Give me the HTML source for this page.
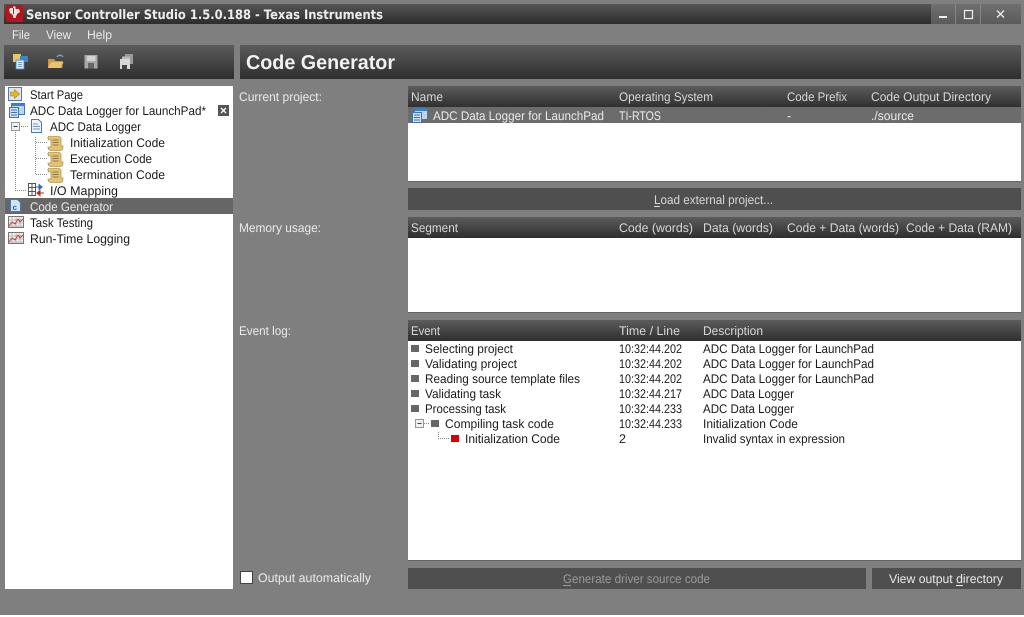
<!DOCTYPE html>
<html><head><meta charset="utf-8"><style>
html,body{margin:0;padding:0;background:#fff;width:1024px;height:617px;overflow:hidden}
svg{display:block}
text{font-family:"Liberation Sans",sans-serif;font-size:12.5px;fill:#1a1a1a;text-rendering:geometricPrecision}
.w{fill:#eaeaea}
.h{fill:#d8d8d8}
</style></head><body>
<svg width="1024" height="617" viewBox="0 0 1024 617" xmlns="http://www.w3.org/2000/svg">
<defs>
<linearGradient id="g" x1="0" y1="0" x2="0" y2="1"><stop offset="0" stop-color="#5c5c5c"/><stop offset="1" stop-color="#2e2e2e"/></linearGradient>
<linearGradient id="t" x1="0" y1="0" x2="0" y2="1"><stop offset="0" stop-color="#555"/><stop offset="1" stop-color="#2c2c2c"/></linearGradient>
<linearGradient id="wb" x1="0" y1="0" x2="0" y2="1"><stop offset="0" stop-color="#707070"/><stop offset="1" stop-color="#5a5a5a"/></linearGradient>
<g id="scroll"><path d="M1.500 1.500h10c2 0 2.500 1.500 2.500 3V11h2v1c0 2-1 3.500-3 3.500H4c-2 0-3-1.500-3-3.500h3V5H2.500C1 5 .5 2.500 1.500 1.500z" fill="#e3c279" stroke="#b8974c" stroke-width=".8"/><path d="M5.500 5h6M5.500 7.500h6M5.500 10h6" stroke="#94753a" stroke-width=".9"/></g>
<g id="chart"><rect x=".5" y="1.500" width="15" height="11" fill="#f3eeee" stroke="#777"/><path d="M1 5h14M1 8h14M1 11h14M4 2v10M8 2v10M12 2v10" stroke="#aaa" stroke-width=".7"/><path d="M1 11l3-4 3 2 3-5 2 3 3-3" fill="none" stroke="#c03a3a"/></g>
<g id="proj"><rect x="3.500" y=".5" width="13" height="11" fill="#bcd6f0" stroke="#3f74b0"/><rect x="3.500" y=".5" width="13" height="2.500" fill="#3f7fc4"/><rect x="1.500" y="4.500" width="9" height="10" fill="#cfe1f4" stroke="#3f74b0"/><path d="M3 7h6M3 9.500h6M3 12h6" stroke="#3f74b0"/></g>
</defs>

<rect width="1024" height="615" fill="#7f7f7f"/>

<!-- title bar -->
<rect x="4" y="4" width="927" height="20" fill="url(#t)"/>
<rect x="931" y="4" width="90" height="20" fill="url(#wb)"/>
<path d="M955.500 4v20M980.500 4v20" stroke="#858585"/>
<rect x="6" y="5" width="17" height="17" fill="#b3161c"/>
<path d="M10 8h3v-1.500h2.500v2.500h3.500l1 3-3 2-1.500 4h-2l-1-3.500-2.500-1.500-1-3z" fill="#f4e4e4"/>
<path d="M13.500 8v6" stroke="#b3161c"/>
<text x="26" y="19" textLength="357" lengthAdjust="spacingAndGlyphs" style="font-family:'DejaVu Sans',sans-serif;font-weight:bold;font-size:13px;fill:#eee">Sensor Controller Studio 1.5.0.188 - Texas Instruments</text>
<rect x="939" y="16" width="8" height="2" fill="#eee"/>
<rect x="964.500" y="10.500" width="8" height="8" fill="none" stroke="#eee" stroke-width="1.200"/>
<path d="M997 10.500l7 7M1004 10.500l-7 7" stroke="#eee" stroke-width="1.300"/>

<!-- menu -->
<text class="w" x="12" y="39" textLength="18" lengthAdjust="spacingAndGlyphs">File</text>
<text class="w" x="46" y="39" textLength="25" lengthAdjust="spacingAndGlyphs">View</text>
<text class="w" x="87" y="39" textLength="25" lengthAdjust="spacingAndGlyphs">Help</text>

<!-- toolbar -->
<rect x="4" y="45" width="230" height="34" fill="url(#g)"/>
<rect x="13" y="54" width="8" height="8" fill="#e8c860"/>
<rect x="20" y="56" width="8" height="6" fill="#3d87c9"/>
<rect x="16" y="60" width="8" height="9" fill="#dbe9f7" stroke="#4a86c0" stroke-width=".8"/>
<path d="M18 62.500h4M18 64.500h4M18 66.500h4" stroke="#4a86c0" stroke-width=".7"/>
<path d="M48 59h6l1.500 2h7v7h-14.500z" fill="#c99a45"/>
<path d="M48 68l3-6h12.500l-3 6z" fill="#eec26b"/>
<path d="M57 57c2-2.500 4-2.500 6 0" fill="none" stroke="#7aa7d0" stroke-width="1.300"/>
<path d="M84.500 55h13v13.500h-13z" fill="#a9a9a9"/>
<rect x="87" y="56" width="8.500" height="5" fill="#d4d4d4"/>
<rect x="88" y="63" width="6" height="5.500" fill="#666"/>
<rect x="125" y="54" width="8" height="10" fill="#999"/>
<rect x="122" y="56.500" width="8" height="10" fill="#bbb"/>
<rect x="120" y="59" width="10" height="10" fill="#d8d8d8"/>
<rect x="122" y="65" width="5" height="4" fill="#444"/>

<!-- code generator header -->
<rect x="240" y="45" width="781" height="34" fill="url(#g)"/>
<text x="246" y="69" textLength="149" lengthAdjust="spacingAndGlyphs" style="font-size:20px;font-weight:bold;fill:#f2f2f2">Code Generator</text>

<!-- tree panel -->
<rect x="5" y="86" width="228" height="503" fill="#fff"/>
<rect x="5" y="198" width="228" height="16" fill="#666"/>
<rect x="8.500" y="87.500" width="13" height="13" fill="#dbe6f5" stroke="#5377ad"/>
<path d="M10.500 92h4v-2.500l5 4.500-5 4.500v-2.500h-4z" fill="#e6b820" stroke="#a07f10" stroke-width=".6"/>
<use href="#proj" x="8" y="103"/>
<text x="30" y="99" textLength="53" lengthAdjust="spacingAndGlyphs">Start Page</text>
<text x="30" y="115" textLength="176" lengthAdjust="spacingAndGlyphs">ADC Data Logger for LaunchPad*</text>
<rect x="218" y="105" width="11" height="11" fill="#555"/>
<path d="M221 108l5 5M226 108l-5 5" stroke="#fff" stroke-width="1.300"/>
<path d="M15.500 132v58.500H27M35.500 137v37M36 142.500H47M36 158.500H47M36 174.500H47M21 126.500h8" stroke="#888" stroke-dasharray="1 1" fill="none"/>
<rect x="11.500" y="122.500" width="8" height="8" fill="#f0f0f0" stroke="#8a9aaa"/>
<path d="M13.500 126.500h4" stroke="#444"/>
<path d="M31.500 119.500h7l3 3v10h-10z" fill="#eef4fb" stroke="#4a78ad"/>
<path d="M33 124h5M33 126.500h7M33 129h7" stroke="#4a78ad" stroke-width=".8"/>
<text x="50" y="131" textLength="91" lengthAdjust="spacingAndGlyphs">ADC Data Logger</text>
<use href="#scroll" x="47" y="135"/>
<use href="#scroll" x="47" y="151"/>
<use href="#scroll" x="47" y="167"/>
<text x="70" y="147" textLength="95" lengthAdjust="spacingAndGlyphs">Initialization Code</text>
<text x="70" y="163" textLength="82" lengthAdjust="spacingAndGlyphs">Execution Code</text>
<text x="70" y="179" textLength="95" lengthAdjust="spacingAndGlyphs">Termination Code</text>
<rect x="28.500" y="183.500" width="7" height="12" fill="#fff" stroke="#555"/>
<path d="M28 187.500h7M28 191.500h7M32 183v12" stroke="#555"/>
<path d="M36 187h5M39 184.500l3 2.500-3 2.500z" stroke="#2f62c9" fill="#2f62c9"/>
<path d="M38 193h6M40 190.500l-3 2.500 3 2.500z" stroke="#c62020" fill="#c62020"/>
<text x="50" y="195" textLength="68" lengthAdjust="spacingAndGlyphs">I/O Mapping</text>
<path d="M10.500 199.500h7l3 3v9h-10z" fill="#cfe2f6" stroke="#4a78ad"/>
<text x="12.500" y="210" style="font-size:8px;fill:#2a5fa5;font-weight:bold">c</text>
<text class="w" x="30" y="211" textLength="83" lengthAdjust="spacingAndGlyphs">Code Generator</text>
<use href="#chart" x="8" y="215"/>
<use href="#chart" x="8" y="231"/>
<text x="30" y="227" textLength="63" lengthAdjust="spacingAndGlyphs">Task Testing</text>
<text x="30" y="243" textLength="100" lengthAdjust="spacingAndGlyphs">Run-Time Logging</text>

<!-- labels -->
<text class="w" x="239" y="101" textLength="83" lengthAdjust="spacingAndGlyphs">Current project:</text>
<text class="w" x="239" y="232" textLength="82" lengthAdjust="spacingAndGlyphs">Memory usage:</text>
<text class="w" x="239" y="335" textLength="52" lengthAdjust="spacingAndGlyphs">Event log:</text>

<!-- table 1 -->
<rect x="408" y="86" width="613" height="96" fill="#fff"/>
<rect x="408" y="181" width="613" height="1" fill="#666"/>
<rect x="408" y="86" width="613" height="22" fill="url(#g)"/>
<rect x="408" y="107" width="613" height="16" fill="#6c6c6c"/>
<text class="h" x="411" y="101" textLength="32" lengthAdjust="spacingAndGlyphs">Name</text>
<text class="h" x="619" y="101" textLength="94" lengthAdjust="spacingAndGlyphs">Operating System</text>
<text class="h" x="787" y="101" textLength="60" lengthAdjust="spacingAndGlyphs">Code Prefix</text>
<text class="h" x="871" y="101" textLength="120" lengthAdjust="spacingAndGlyphs">Code Output Directory</text>
<use href="#proj" x="411" y="108"/>
<text class="w" x="433" y="120" textLength="171" lengthAdjust="spacingAndGlyphs">ADC Data Logger for LaunchPad</text>
<text class="w" x="619" y="120" textLength="42" lengthAdjust="spacingAndGlyphs">TI-RTOS</text>
<text class="w" x="787" y="120">-</text>
<text class="w" x="871" y="120" textLength="43" lengthAdjust="spacingAndGlyphs">./source</text>

<!-- load button -->
<rect x="408" y="188" width="613" height="22" fill="#4f4f4f"/>
<text class="h" x="654" y="204" textLength="119" lengthAdjust="spacingAndGlyphs">Load external project...</text>
<path d="M654 206.500h6" stroke="#ddd"/>

<!-- table 2 -->
<rect x="408" y="217" width="613" height="96" fill="#fff"/>
<rect x="408" y="312" width="613" height="1" fill="#666"/>
<rect x="408" y="217" width="613" height="21" fill="url(#g)"/>
<text class="h" x="411" y="232" textLength="47" lengthAdjust="spacingAndGlyphs">Segment</text>
<text class="h" x="619" y="232" textLength="74" lengthAdjust="spacingAndGlyphs">Code (words)</text>
<text class="h" x="703" y="232" textLength="70" lengthAdjust="spacingAndGlyphs">Data (words)</text>
<text class="h" x="787" y="232" textLength="112" lengthAdjust="spacingAndGlyphs">Code + Data (words)</text>
<text class="h" x="906" y="232" textLength="106" lengthAdjust="spacingAndGlyphs">Code + Data (RAM)</text>

<!-- table 3 -->
<rect x="408" y="320" width="613" height="241" fill="#fff"/>
<rect x="408" y="560" width="613" height="1" fill="#666"/>
<rect x="408" y="320" width="613" height="21" fill="url(#g)"/>
<text class="h" x="411" y="335" textLength="29" lengthAdjust="spacingAndGlyphs">Event</text>
<text class="h" x="619" y="335" textLength="61" lengthAdjust="spacingAndGlyphs">Time / Line</text>
<text class="h" x="703" y="335" textLength="60" lengthAdjust="spacingAndGlyphs">Description</text>

<g fill="#666">
<rect x="411" y="345" width="8" height="7"/>
<rect x="411" y="360" width="8" height="7"/>
<rect x="411" y="375" width="8" height="7"/>
<rect x="411" y="390" width="8" height="7"/>
<rect x="411" y="405" width="8" height="7"/>
<rect x="431" y="420" width="8" height="7"/>
</g>
<rect x="451" y="435" width="8" height="7" fill="#d90000"/>
<rect x="415.500" y="419.500" width="8" height="8" fill="#f0f0f0" stroke="#8a9aaa"/>
<path d="M417.500 423.500h4" stroke="#444"/>
<path d="M424 423.500h6M438.500 432v6.500h11" stroke="#888" stroke-dasharray="1 1" fill="none"/>

<text x="425" y="353" textLength="88" lengthAdjust="spacingAndGlyphs">Selecting project</text>
<text x="425" y="368" textLength="92" lengthAdjust="spacingAndGlyphs">Validating project</text>
<text x="425" y="383" textLength="155" lengthAdjust="spacingAndGlyphs">Reading source template files</text>
<text x="425" y="398" textLength="76" lengthAdjust="spacingAndGlyphs">Validating task</text>
<text x="425" y="413" textLength="81" lengthAdjust="spacingAndGlyphs">Processing task</text>
<text x="445" y="428" textLength="109" lengthAdjust="spacingAndGlyphs">Compiling task code</text>
<text x="465" y="443" textLength="95" lengthAdjust="spacingAndGlyphs">Initialization Code</text>

<text x="619" y="353" textLength="63" lengthAdjust="spacingAndGlyphs">10:32:44.202</text>
<text x="619" y="368" textLength="63" lengthAdjust="spacingAndGlyphs">10:32:44.202</text>
<text x="619" y="383" textLength="63" lengthAdjust="spacingAndGlyphs">10:32:44.202</text>
<text x="619" y="398" textLength="63" lengthAdjust="spacingAndGlyphs">10:32:44.217</text>
<text x="619" y="413" textLength="63" lengthAdjust="spacingAndGlyphs">10:32:44.233</text>
<text x="619" y="428" textLength="63" lengthAdjust="spacingAndGlyphs">10:32:44.233</text>
<text x="619" y="443">2</text>

<text x="703" y="353" textLength="171" lengthAdjust="spacingAndGlyphs">ADC Data Logger for LaunchPad</text>
<text x="703" y="368" textLength="171" lengthAdjust="spacingAndGlyphs">ADC Data Logger for LaunchPad</text>
<text x="703" y="383" textLength="171" lengthAdjust="spacingAndGlyphs">ADC Data Logger for LaunchPad</text>
<text x="703" y="398" textLength="91" lengthAdjust="spacingAndGlyphs">ADC Data Logger</text>
<text x="703" y="413" textLength="91" lengthAdjust="spacingAndGlyphs">ADC Data Logger</text>
<text x="703" y="428" textLength="95" lengthAdjust="spacingAndGlyphs">Initialization Code</text>
<text x="703" y="443" textLength="142" lengthAdjust="spacingAndGlyphs">Invalid syntax in expression</text>

<!-- bottom -->
<rect x="240.500" y="571.500" width="12" height="12" fill="#fff" stroke="#444"/>
<text class="w" x="258" y="582" textLength="113" lengthAdjust="spacingAndGlyphs">Output automatically</text>
<rect x="408" y="568" width="458" height="21" fill="#4f4f4f"/>
<text x="563" y="583" textLength="147" lengthAdjust="spacingAndGlyphs" style="fill:#9a9a9a">Generate driver source code</text>
<path d="M563 585.500h8" stroke="#9a9a9a"/>
<rect x="872" y="568" width="149" height="21" fill="#4f4f4f"/>
<text class="w" x="889" y="583" textLength="114" lengthAdjust="spacingAndGlyphs">View output directory</text>
<path d="M956 585.500h7" stroke="#eee"/>
</svg>
</body></html>
